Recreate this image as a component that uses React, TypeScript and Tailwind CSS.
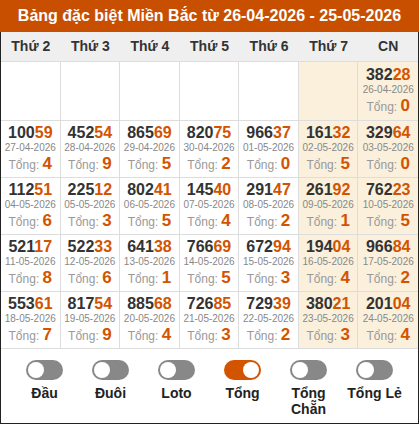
import React from "react";

type Cell = { n: string; d: string; t: string } | null;

const rows: Cell[][] = [
  [null, null, null, null, null, null, { n: "38228", d: "26-04-2026", t: "0" }],
  [
    { n: "10059", d: "27-04-2026", t: "4" },
    { n: "45254", d: "28-04-2026", t: "9" },
    { n: "86569", d: "29-04-2026", t: "5" },
    { n: "82075", d: "30-04-2026", t: "2" },
    { n: "96637", d: "01-05-2026", t: "0" },
    { n: "16132", d: "02-05-2026", t: "5" },
    { n: "32964", d: "03-05-2026", t: "0" },
  ],
  [
    { n: "11251", d: "04-05-2026", t: "6" },
    { n: "22512", d: "05-05-2026", t: "3" },
    { n: "80241", d: "06-05-2026", t: "5" },
    { n: "14540", d: "07-05-2026", t: "4" },
    { n: "29147", d: "08-05-2026", t: "2" },
    { n: "26192", d: "09-05-2026", t: "1" },
    { n: "76223", d: "10-05-2026", t: "5" },
  ],
  [
    { n: "52117", d: "11-05-2026", t: "8" },
    { n: "52233", d: "12-05-2026", t: "6" },
    { n: "64138", d: "13-05-2026", t: "1" },
    { n: "76669", d: "14-05-2026", t: "5" },
    { n: "67294", d: "15-05-2026", t: "3" },
    { n: "19404", d: "16-05-2026", t: "4" },
    { n: "96684", d: "17-05-2026", t: "2" },
  ],
  [
    { n: "55361", d: "18-05-2026", t: "7" },
    { n: "81754", d: "19-05-2026", t: "9" },
    { n: "88568", d: "20-05-2026", t: "4" },
    { n: "72685", d: "21-05-2026", t: "3" },
    { n: "72939", d: "22-05-2026", t: "2" },
    { n: "38021", d: "23-05-2026", t: "3" },
    { n: "20104", d: "24-05-2026", t: "4" },
  ],
];

const days = ["Thứ 2", "Thứ 3", "Thứ 4", "Thứ 5", "Thứ 6", "Thứ 7", "CN"];

const toggles = [
  { label: "Đầu", on: false },
  { label: "Đuôi", on: false },
  { label: "Loto", on: false },
  { label: "Tổng", on: true },
  { label: "Tổng Chẵn", on: false },
  { label: "Tổng Lẻ", on: false },
];

export default function App() {
  return (
    <div className="w-[419px] h-[424px] bg-white font-['Liberation_Sans',Arial,sans-serif]">
      <div className="h-[32px] bg-[#c94f00] text-white font-bold text-[16px] flex items-center justify-center">
        Bảng đặc biệt Miền Bắc từ 26-04-2026 - 25-05-2026
      </div>
      <div className="h-[392px] border-x border-b border-[#222] flex flex-col">
        <div className="grid grid-cols-7 h-[30px] bg-[#efefef] border-b border-[#ddd]">
          {days.map((d) => (
            <div key={d} className="flex items-center justify-center text-[14px] font-bold text-[#333]">
              {d}
            </div>
          ))}
        </div>
        {rows.map((row, ri) => (
          <div key={ri} className={`grid grid-cols-7 border-b border-[#ddd] ${ri === 0 ? "h-[59px]" : "h-[57px]"}`}>
            {row.map((c, ci) => (
              <div
                key={ci}
                className={`flex flex-col items-center justify-center ${ci < 6 ? "border-r border-[#ddd]" : ""} ${ci >= 5 ? "bg-[#faf0dc]" : "bg-white"}`}
              >
                {c && (
                  <>
                    <div className="text-[16px] leading-[18px] font-bold text-[#333]">
                      {c.n.slice(0, 3)}
                      <span className="text-[#d35400]">{c.n.slice(3)}</span>
                    </div>
                    <div className="text-[10px] leading-[12px] text-[#888]">{c.d}</div>
                    <div className="leading-[20px] text-[12px] text-[#999]">
                      Tổng: <span className="text-[17px] font-bold text-[#d35400]">{c.t}</span>
                    </div>
                  </>
                )}
              </div>
            ))}
          </div>
        ))}
        <div className="flex justify-center pt-[11px]">
          {toggles.map((t) => (
            <div key={t.label} className="w-[66px] flex flex-col items-center">
              <div
                className={`w-[37px] h-[20px] rounded-full p-[2px] flex ${t.on ? "bg-[#d35400] justify-end" : "bg-[#888] justify-start"}`}
              >
                <div className="w-[16px] h-[16px] rounded-full bg-white" />
              </div>
              <div className="mt-[5px] text-[14px] leading-[16px] font-bold text-[#222] text-center">
                {t.label}
              </div>
            </div>
          ))}
        </div>
      </div>
    </div>
  );
}
